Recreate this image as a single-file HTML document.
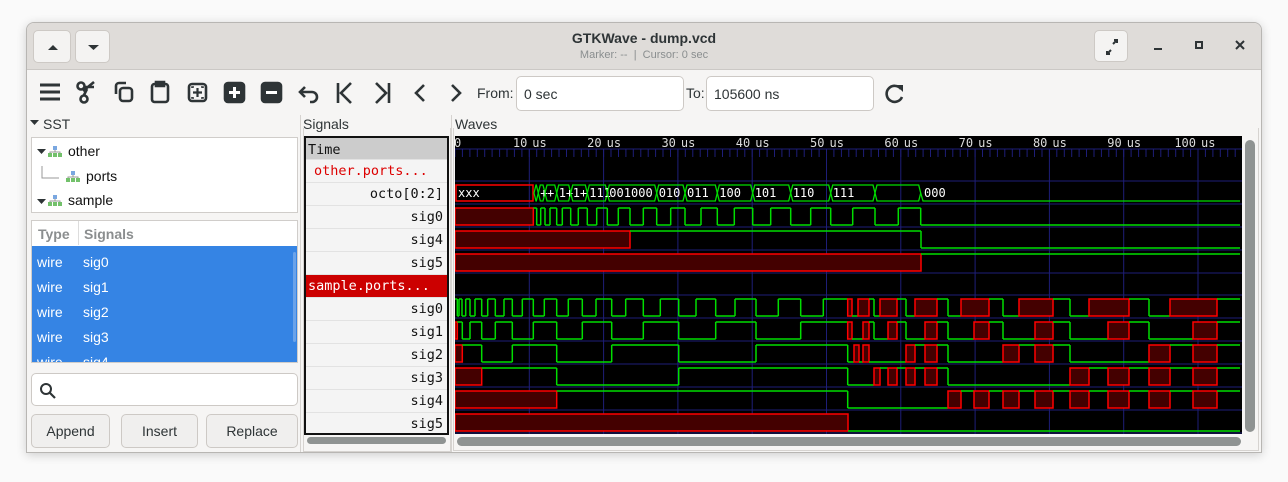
<!DOCTYPE html>
<html><head><meta charset="utf-8">
<style>
*{box-sizing:border-box;margin:0;padding:0}
body{width:1288px;height:482px;background:#fafafa;font-family:"Liberation Sans",sans-serif;position:relative;overflow:hidden}
.win{position:absolute;left:26px;top:22px;width:1236px;height:431px;background:#f6f5f4;border:1px solid #b8b6b3;border-radius:8px 8px 0 0;box-shadow:0 2px 10px rgba(0,0,0,.18);overflow:hidden}
.title{position:absolute;left:0;top:0;width:100%;height:47px;background:#dfdcd9;border-bottom:1px solid #cbc8c5}
.btn{position:absolute;background:#f4f3f2;border:1px solid #cdc9c5;border-radius:5px}
.a{position:absolute;white-space:nowrap}
.entry{position:absolute;background:#fff;border:1px solid #cdc9c5;border-radius:5px;font-size:14px;color:#2e3436;padding:9px 0 0 7px}
.mono{font-family:"DejaVu Sans Mono","Liberation Mono",monospace}
.srow{position:absolute;left:0;width:141px;height:23px;border-bottom:1px solid #e2e2e2;font-size:13.5px;text-align:right;padding-right:4px;padding-top:3px;color:#111}
.pb{position:absolute;top:391px;height:34px;background:#f0efee;border:1px solid #cdc9c5;border-radius:5px;font-size:14px;color:#2e3436;text-align:center;padding-top:8px}
</style></head><body>
<div class="win">
 <div class="title">
  <div class="btn" style="left:6px;top:7px;width:38px;height:33px"><svg width="38" height="33"><path d="M14 19 L19 14 L24 19Z" fill="#2e3436"/></svg></div>
  <div class="btn" style="left:48px;top:7px;width:35px;height:33px"><svg width="35" height="33"><path d="M12 14 L17.5 19 L23 14Z" fill="#2e3436"/></svg></div>
  <div class="a" style="left:0;width:100%;top:7px;text-align:center;font-size:14px;font-weight:bold;color:#2e3436">GTKWave - dump.vcd</div>
  <div class="a" style="left:0;width:100%;top:26px;text-align:center;font-size:11px;color:#8a8e8f">Marker: --&nbsp; | &nbsp;Cursor: 0 sec</div>
  <div class="btn" style="left:1067px;top:7px;width:34px;height:32px"><svg width="34" height="32"><path d="M12 20 L12 23 L15 23 M12 23 L16 19 M22 12 L22 9 L19 9 M22 9 L18 13" stroke="#2e3436" stroke-width="2" fill="none"/></svg></div>
  <div class="a" style="left:1127px;top:25px;width:8px;height:2px;background:#2e3436"></div>
  <div class="a" style="left:1168px;top:18px;width:8px;height:8px;border:2px solid #2e3436"></div>
  <svg class="a" style="left:1208px;top:17px" width="10" height="10"><path d="M1 1L9 9M9 1L1 9" stroke="#2e3436" stroke-width="2"/></svg>
 </div>
 <svg class="a" style="left:0;top:48px" width="460" height="46" fill="none" stroke="#2e3436" stroke-width="2.6">
  <path d="M13 14h20M13 21h20M13 28h20" stroke-width="3"/>
  <circle cx="54" cy="15" r="3.5"/><circle cx="57" cy="28" r="3.5"/><path d="M57 16 L67 16 M56 20 L67 11 M57 24 L60 18"/>
  <path d="M89 23 v-8 a3 3 0 0 1 3-3 h7"/><rect x="93" y="17" width="12" height="13" rx="3"/>
  <rect x="125" y="13" width="16" height="18" rx="2.5"/><path d="M129 11h8v4h-8z" fill="#2e3436"/>
  <rect x="162" y="13" width="17" height="17" rx="3"/><path d="M166 21.5h9M170.5 17v9" stroke-width="2.2"/><path d="M165 17v-1h2M176 17v-1h-2M165 26v1h2M176 26v1h-2" stroke-width="1.6"/>
  <rect x="198" y="12" width="19" height="19" rx="3" fill="#2e3436"/><path d="M202 21.5h11M207.5 16v11" stroke="#fff" stroke-width="3"/>
  <rect x="235" y="12" width="19" height="19" rx="3" fill="#2e3436"/><path d="M239 21.5h11" stroke="#fff" stroke-width="3"/>
  <path d="M278 16 L273 21 L278 26 M273 21 h12 a5 5 0 0 1 0 10 h-2"/>
  <path d="M311 12v20M324 12 L314 22 L324 32"/>
  <path d="M362 12v20M349 12 L359 22 L349 32"/>
  <path d="M397 14 L389 22 L397 30"/>
  <path d="M425 14 L433 22 L425 30"/>
 </svg>
 <div class="a" style="left:450px;top:62px;font-size:14px;color:#2e3436">From:</div>
 <div class="entry" style="left:489px;top:53px;width:168px;height:35px">0 sec</div>
 <div class="a" style="left:659px;top:62px;font-size:14px;color:#2e3436">To:</div>
 <div class="entry" style="left:679px;top:53px;width:168px;height:35px">105600 ns</div>
 <svg class="a" style="left:855px;top:59px" width="24" height="24"><path d="M19 7 A8 8 0 1 0 20 15" fill="none" stroke="#2e3436" stroke-width="2.6"/><path d="M14 3 L21 3 L21 10Z" fill="#2e3436"/></svg>
 <svg class="a" style="left:3px;top:96px" width="10" height="8"><path d="M0 1h9l-4.5 5z" fill="#2e3436"/></svg>
 <div class="a" style="left:16px;top:93px;font-size:14px;color:#2e3436">SST</div>
 <div class="a" style="left:4px;top:114px;width:267px;height:76px;background:#fff;border:1px solid #d0cdca">
  <svg class="a" style="left:5px;top:0" width="60" height="76"><path d="M0 11h9l-4.5 5z M0 61h9l-4.5 5z" fill="#2e3436"/><path d="M5 28v12h17" stroke="#999" fill="none"/>
   <g id="ic"><rect x="16" y="8" width="4" height="4" fill="#7aa7e0"/><path d="M18 12v2M13 15v-1h10v1" stroke="#999" fill="none"/><rect x="11" y="15" width="4" height="4" fill="#73c16b"/><rect x="16" y="15" width="4" height="4" fill="#73c16b"/><rect x="21" y="15" width="4" height="4" fill="#73c16b"/></g>
   <use href="#ic" x="18" y="25"/><use href="#ic" x="0" y="49"/></svg>
  <div class="a" style="left:36px;top:5px;font-size:14px;color:#111">other</div>
  <div class="a" style="left:54px;top:30px;font-size:14px;color:#111">ports</div>
  <div class="a" style="left:36px;top:54px;font-size:14px;color:#111">sample</div>
 </div>
 <div class="a" style="left:4px;top:197px;width:267px;height:143px;background:#fff;border:1px solid #d0cdca;overflow:hidden">
  <div class="a" style="left:6px;top:5px;font-size:14px;font-weight:bold;color:#8b8e8f">Type</div>
  <div class="a" style="left:46px;top:0;width:1px;height:24px;background:#ddd"></div>
  <div class="a" style="left:52px;top:5px;font-size:14px;font-weight:bold;color:#8b8e8f">Signals</div>
  <div class="a" style="left:0;top:25px;width:267px;height:118px;background:#3584e4"></div>
  <div class="a" style="left:261px;top:31px;width:3px;height:90px;background:#6aa3ea;border-radius:2px"></div>
  <div class="a" style="left:5px;top:29px;font-size:14px;color:#fff;line-height:25px">wire<br>wire<br>wire<br>wire<br>wire</div>
  <div class="a" style="left:51px;top:29px;font-size:14px;color:#fff;line-height:25px">sig0<br>sig1<br>sig2<br>sig3<br>sig4</div>
 </div>
 <div class="a" style="left:4px;top:350px;width:267px;height:33px;background:#fff;border:1px solid #cdc9c5;border-radius:5px"><svg class="a" style="left:7px;top:8px" width="18" height="18"><circle cx="7" cy="7" r="5" stroke="#2e3436" stroke-width="2" fill="none"/><path d="M11 11l5 5" stroke="#2e3436" stroke-width="2.2"/></svg></div>
 <div class="pb" style="left:4px;width:79px">Append</div>
 <div class="pb" style="left:94px;width:77px">Insert</div>
 <div class="pb" style="left:179px;width:92px">Replace</div>
 <div class="a" style="left:273px;top:92px;width:1px;height:338px;background:#d6d3d0"></div>
 <div class="a" style="left:276px;top:93px;font-size:14px;color:#2e3436">Signals</div>
 <div class="a" style="left:276px;top:105px;width:148px;height:324px;border:1px solid #d6d3d0;border-top:none"></div>
 <div class="a" style="left:277px;top:113px;width:145px;height:299px;border:2px solid #111;background:#f4f4f4;overflow:hidden">
  <div class="srow mono" style="top:0;height:22px;background:#ccc;text-align:left;padding-left:2px;padding-top:4px">Time</div>
  <div class="srow mono" style="top:22px;color:#d00;text-align:left;padding-left:8px">other.ports...</div>
  <div class="srow mono" style="top:45px">octo[0:2]</div>
  <div class="srow mono" style="top:68px">sig0</div>
  <div class="srow mono" style="top:91px">sig4</div>
  <div class="srow mono" style="top:114px">sig5</div>
  <div class="srow mono" style="top:137px;background:#c00;color:#fff;text-align:left;padding-left:2px">sample.ports...</div>
  <div class="srow mono" style="top:160px">sig0</div>
  <div class="srow mono" style="top:183px">sig1</div>
  <div class="srow mono" style="top:206px">sig2</div>
  <div class="srow mono" style="top:229px">sig3</div>
  <div class="srow mono" style="top:252px">sig4</div>
  <div class="srow mono" style="top:275px">sig5</div>
 </div>
 <div class="a" style="left:280px;top:414px;width:139px;height:7px;background:#8f9392;border-radius:4px"></div>
 <div class="a" style="left:424px;top:92px;width:1px;height:338px;background:#d6d3d0"></div>
 <div class="a" style="left:428px;top:93px;font-size:14px;color:#2e3436">Waves</div>
 <div class="a" style="left:426px;top:105px;width:806px;height:323px;border:1px solid #d6d3d0;border-top:none"></div>
 <div class="a" style="left:1218px;top:117px;width:10px;height:292px;background:#8f9392;border-radius:5px"></div>
 <div class="a" style="left:430px;top:414px;width:784px;height:9px;background:#8f9392;border-radius:5px"></div>
</div>
<svg id="w" style="position:absolute;left:455px;top:136px" width="787" height="298" viewBox="455 136 787 298"></svg>
<script>
var s='<rect x="455" y="136" width="787" height="298" fill="#000"/>';
var G='#1e1e78',F='font-size="12" font-family="DejaVu Sans Mono"';
s+='<path d="M455 149H1242" stroke="'+G+'"/>';
for(var i=0;i<106;i++){var x=455+7.43*i;s+='<path d="M'+x.toFixed(1)+' 149v8" stroke="'+G+'"/>';}
for(var k=1;k<=10;k++){var L=455+74.3*k;s+='<path d="M'+L.toFixed(1)+' 149V434" stroke="'+G+'"/>';
 s+='<text x="'+(L-2)+'" y="147" text-anchor="end" fill="#ddd" '+F+'>'+(k*10)+'</text><text x="'+(L+3)+'" y="147" fill="#ddd" '+F+'>us</text>';}
s+='<text x="454" y="147" fill="#ddd" '+F+'>0</text>';
[181,204,227,250,273,295,318,341,364,387,410,433].forEach(function(y){s+='<path d="M455 '+y+'H1242" stroke="'+G+'"/>';});
function row(top,str,end){var a=str.trim().split(/\s+/).map(function(t){return[parseFloat(t),t.slice(-1)]});
 var H=top+4,Lo=top+21,prev=null;
 for(var i=0;i<a.length;i++){var x1=a[i][0],x2=i+1<a.length?a[i+1][0]:end,t=a[i][1];
  if(t=='r'){s+='<rect x="'+x1+'" y="'+H+'" width="'+(x2-x1)+'" height="'+(Lo-H)+'" fill="#440000" stroke="#f00" stroke-width="1.5"/>';}
  else{var y=t=='h'?H:Lo;s+='<path d="M'+x1+' '+y+'H'+x2+'" stroke="#0d0" stroke-width="1.5"/>';
   if(prev&&prev!='r'&&prev!=t)s+='<path d="M'+x1+' '+H+'V'+Lo+'" stroke="#0d0" stroke-width="1.5"/>';}
  prev=t;}}
row(295,"455h 457.3l 459h 462l 465.7h 470l 475h 481.7l 487.7h 495.3l 504h 512.3l 522.3h 533.3l 544.3h 556.7l 568.3h 582.3l 596h 611.7l 625.7h 643.3l 660.3h 678.7l 696h 715.7l 735h 756l 778.3h 800.7l 823.3h 847.7r 852l 858r 869h 874l 880r 897h 906l 915r 937h 948l 961r 989h 1003l 1019r 1053h 1070l 1089r 1129h 1149l 1170r 1217h",1240);
row(318,"455r 457.3h 462.3l 470h 481.7l 495.3h 512.3l 533.3h 556.7l 582.3h 611.7l 643.3h 678.7l 715.7h 756l 800.7h 847.7r 852l 863r 869h 874l 888r 897h 906l 925r 937h 948l 974r 989h 1003l 1035r 1053h 1070l 1108r 1129h 1149l 1193r 1217h",1240);
row(341,"455r 462.3h 481.7l 512.3h 556.7l 611.7h 678.7l 756h 847.7l 854r 859l 863r 869l 906r 915h 925r 937h 948l 1003r 1019h 1035r 1053h 1070l 1149r 1170h 1193r 1217h",1240);
row(364,"455r 481.7h 556.7l 678.7h 847.7l 874r 880h 888r 897h 906r 915h 925r 937h 948l 1070r 1089h 1108r 1129h 1149r 1170h 1193r 1217h",1240);
row(387,"455r 556.7h 847.7l 948r 961h 974r 989h 1003r 1019h 1035r 1053h 1070r 1089h 1108r 1129h 1149r 1170h 1193r 1217h",1240);
row(410,"455r 848l",1240);
row(204,"455r 533.3h 536.7l 540.7h 545l 550h 556.7l 562.3h 570.7l 578.3h 587.3l 596.7h 607.3l 618.3h 630l 643.3h 656.7l 670.7h 685l 701h 717.3l 734.3h 752.7l 770.7h 790.7l 810.7h 830.7l 852.7h 875l 898.3h 920.7l",1240);
row(227,"455r 630h 921l",1240);
row(250,"455r 921h",1240);
s+='<rect x="456" y="185" width="77" height="16" fill="none" stroke="#f00" stroke-width="1.5"/><text x="458" y="197" fill="#fff" '+F+'>xxx</text>';
var b=[534,538.3,545,556.7,570.7,587.3,607.3,656.7,685,717.3,752.7,790.7,830.7,875,920.7];
var lb=["","","+","+","1+","1+","111","001","010","011","100","101","110","111"];
for(var i=0;i<b.length-1;i++){var x1=b[i],x2=b[i+1],d=Math.min(2,(x2-x1)/2);
 s+='<path d="M'+x1+' 193L'+(x1+d)+' 185H'+(x2-d)+'L'+x2+' 193L'+(x2-d)+' 201H'+(x1+d)+'Z" fill="none" stroke="#0d0" stroke-width="1.3"/>';
 if(lb[i+1])s+='<text x="'+(x1+2)+'" y="197" fill="#fff" '+F+'>'+lb[i+1]+'</text>';}
s+='<text x="631" y="197" fill="#fff" '+F+'>000</text>';
s+='<path d="M920.7 193L923 201H1240" stroke="#0d0" stroke-width="1.3" fill="none"/><text x="924" y="197" fill="#fff" '+F+'>000</text>';
document.getElementById('w').innerHTML=s;
</script>
</body></html>
